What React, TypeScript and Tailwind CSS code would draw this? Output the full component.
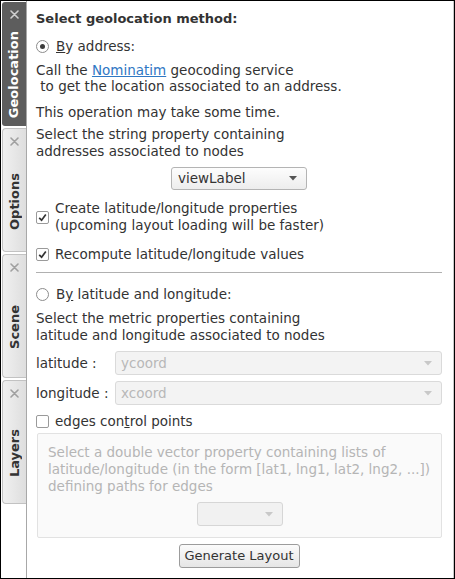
import React from 'react';

const TABS = [
  { id: 'geo', label: 'Geolocation', active: true },
  { id: 'opt', label: 'Options', active: false },
  { id: 'scene', label: 'Scene', active: false },
  { id: 'layers', label: 'Layers', active: false },
];

function CloseMark({ color }: { color: string }) {
  return (
    <svg width="9" height="9" viewBox="0 0 9 9">
      <path d="M1 1 L8 8 M8 1 L1 8" stroke={color} strokeWidth="1.6" strokeLinecap="round" />
    </svg>
  );
}

function Arrow({ color }: { color: string }) {
  return (
    <svg width="8" height="5" viewBox="0 0 8 5">
      <path d="M0 0 L8 0 L4 4.5 Z" fill={color} />
    </svg>
  );
}

function Radio({ checked }: { checked?: boolean }) {
  return (
    <span className="w-[13px] h-[13px] rounded-full border border-[#8c8c8c] bg-white flex items-center justify-center shrink-0">
      {checked && <span className="w-[5px] h-[5px] rounded-full bg-[#3c3c3c]" />}
    </span>
  );
}

function Check({ checked }: { checked?: boolean }) {
  return (
    <span className="w-[13px] h-[13px] rounded-[2px] border border-[#9a9a9a] bg-white flex items-center justify-center shrink-0">
      {checked && (
        <svg width="9" height="9" viewBox="0 0 9 9">
          <path d="M1.2 4.8 L3.6 7.2 L7.8 1.6" stroke="#333" strokeWidth="1.7" fill="none" />
        </svg>
      )}
    </span>
  );
}

export default function App() {
  return (
    <div className="w-[455px] h-[579px] border border-black flex bg-white text-[13.5px] text-[#333] font-['DejaVu_Sans',sans-serif] overflow-hidden">
      {/* vertical tab bar */}
      <div className="w-[26px] shrink-0 border-r border-[#a8a8a8] bg-white flex flex-col gap-[2px] pt-[1px] pl-[1px]">
        {TABS.map((t) => (
          <div
            key={t.id}
            className={
              t.active
                ? 'h-[124px] bg-[#5d5d5d] rounded-l-[3px] flex flex-col items-center'
                : 'h-[124px] bg-gradient-to-r from-[#f0f0f0] to-[#dedede] border border-r-0 border-[#c2c2c2] rounded-l-[4px] flex flex-col items-center'
            }
          >
            <div className="h-[22px] flex items-center pt-[2px]">
              <CloseMark color={t.active ? '#cfcfcf' : '#a0a0a0'} />
            </div>
            <div className="flex-1 flex items-center justify-center">
              <span
                className={
                  '[writing-mode:vertical-rl] rotate-180 font-bold text-[13px] leading-[16px] ' +
                  (t.active ? 'text-white' : 'text-[#333]')
                }
              >
                {t.label}
              </span>
            </div>
          </div>
        ))}
      </div>

      {/* panel */}
      <div className="flex-1 border-r border-[#c8c8c8] pl-[9px] pr-[11px] flex flex-col">
        <div className="mt-[10px] h-[16px] leading-[16px] font-bold text-[13px]">Select geolocation method:</div>

        <div className="mt-[10px] h-[18px] flex items-center gap-[7px]">
          <Radio checked />
          <span className="leading-[18px]">
            <span className="underline">B</span>y address:
          </span>
        </div>

        <div className="mt-[7px] leading-[16px]">
          <div>
            Call the <span className="text-[#2f78c4] underline">Nominatim</span> geocoding service
          </div>
          <div>&nbsp;to get the location associated to an address.</div>
        </div>

        <div className="mt-[10px] leading-[16px]">This operation may take some time.</div>

        <div className="mt-[6px] leading-[17px]">
          <div>Select the string property containing</div>
          <div>addresses associated to nodes</div>
        </div>

        <div className="mt-[7px] flex justify-center">
          <div className="w-[136px] h-[23px] rounded-[3px] border border-[#b4b4b4] bg-gradient-to-b from-[#fdfdfd] to-[#ededed] flex items-center justify-between pl-[6px] pr-[9px]">
            <span>viewLabel</span>
            <Arrow color="#555" />
          </div>
        </div>

        <div className="mt-[10px] flex items-center gap-[6px]">
          <Check checked />
          <div className="leading-[17px]">
            <div>Create latitude/longitude properties</div>
            <div>(upcoming layout loading will be faster)</div>
          </div>
        </div>

        <div className="mt-[12px] flex items-center gap-[6px]">
          <Check checked />
          <span className="leading-[17px]">Recompute latitude/longitude values</span>
        </div>

        <div className="mt-[9px] h-px bg-[#b0b0b0]" />

        <div className="mt-[12px] h-[18px] flex items-center gap-[7px]">
          <Radio />
          <span className="leading-[18px]">
            B<span className="underline">y</span> latitude and longitude:
          </span>
        </div>

        <div className="mt-[7px] leading-[17px]">
          <div>Select the metric properties containing</div>
          <div>latitude and longitude associated to nodes</div>
        </div>

        <div className="mt-[7px] flex items-center">
          <span className="w-[79px]">latitude :</span>
          <div className="flex-1 h-[24px] rounded-[3px] border border-[#dadada] bg-[#f3f3f3] flex items-center justify-between pl-[5px] pr-[9px] text-[#b8b8b8]">
            <span>ycoord</span>
            <Arrow color="#c8c8c8" />
          </div>
        </div>

        <div className="mt-[6px] flex items-center">
          <span className="w-[79px]">longitude :</span>
          <div className="flex-1 h-[24px] rounded-[3px] border border-[#dadada] bg-[#f3f3f3] flex items-center justify-between pl-[5px] pr-[9px] text-[#b8b8b8]">
            <span>xcoord</span>
            <Arrow color="#c8c8c8" />
          </div>
        </div>

        <div className="mt-[8px] h-[17px] flex items-center gap-[6px]">
          <Check />
          <span className="leading-[17px]">
            edges con<span className="underline">t</span>rol points
          </span>
        </div>

        <div className="mt-[3px] ml-px h-[105px] border border-[#e2e2e2] rounded-[2px] bg-[#fafafa] pt-[10px] pl-[10px] flex flex-col text-[#b5b5b5]">
          <div className="leading-[17px]">
            <div>Select a double vector property containing lists of</div>
            <div>latitude/longitude (in the form [lat1, lng1, lat2, lng2, ...])</div>
            <div>defining paths for edges</div>
          </div>
          <div className="mt-[7px] flex justify-center pr-[10px]">
            <div className="w-[86px] h-[24px] rounded-[3px] border border-[#d6d6d6] bg-[#f1f1f1] flex items-center justify-end pr-[9px]">
              <Arrow color="#c8c8c8" />
            </div>
          </div>
        </div>

        <div className="mt-[6px] flex justify-center">
          <div className="w-[121px] h-[24px] rounded-[3px] border border-[#9c9c9c] bg-gradient-to-b from-[#fbfbfb] to-[#e6e6e6] flex items-center justify-center text-[13px]">
            Generate Layout
          </div>
        </div>
      </div>
    </div>
  );
}
